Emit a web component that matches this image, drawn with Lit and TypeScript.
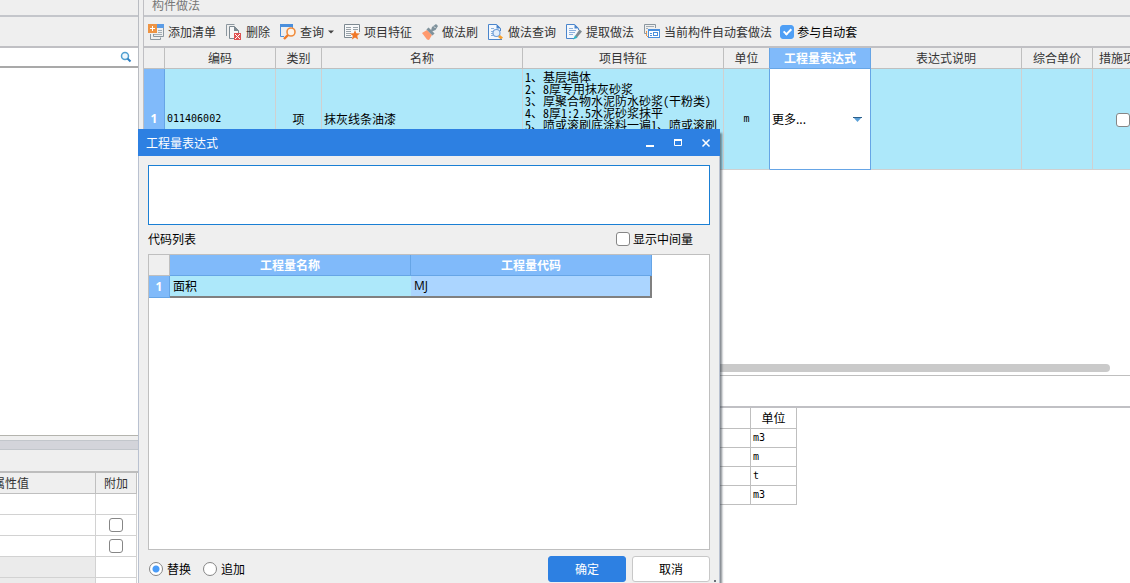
import { LitElement, html, css, svg, nothing } from "lit";
import { customElement, property, state } from "lit/decorators.js";

const icons: Record<string, unknown> = {
  add: svg`<path d="M9 0.500h6.500v11" fill="none" stroke="#8c979f"/><rect x="9" y="0" width="7" height="4" fill="#5b9ce6"/>
    <path d="M10 6.500h4M10 8.500h4M6 10.500h8" stroke="#a3adb4"/>
    <path d="M2.500 10v5.500h10v-2M5.500 10v2.500h10v-2" fill="none" stroke="#8c979f"/>
    <rect x="0" y="0" width="9" height="9" fill="#ee9444"/><path d="M4.500 2v5M2 4.500h5" stroke="#fff"/>`,
  remove: svg`<path d="M0.500 12V0.500h8" fill="none" stroke="#8c979f"/><path d="M8 14.500H3.500V2.500h5l4 4V9" fill="#f6f7f8" stroke="#7d8991"/>
    <path d="M8 2v5h5z" fill="#7d8991"/><rect x="8" y="9" width="7" height="7" fill="#e05252"/>
    <path d="M9 10l5 5M14 10l-5 5" stroke="#fff"/>`,
  query: svg`<path d="M0.500 0v12.500H4M12.500 2v2" fill="none" stroke="#4a8fdc"/><rect x="0" y="0" width="13" height="3" fill="#4a8fdc"/>
    <circle cx="11" cy="8" r="4" fill="#fdf4ea" stroke="#f08c3c" stroke-width="1.600"/><path d="M8 11l-4 4" stroke="#ee7a28" stroke-width="2.400"/>`,
  feature: svg`<path d="M8 13.500H0.500V0.500h15V8" fill="#f8f9fa" stroke="#7d8991"/>
    <path d="M2 3.500h5M2 5.500h5M2 7.500h5M2 9.500h5M2 11.500h5M9 3.500h5M9 5.500h5" stroke="#98a2a9"/>
    <path d="M11 6l1.300 3.200 3.700.3-2.800 2.300.9 3.700-3.100-2-3.100 2 .9-3.700L6 9.500l3.700-.3z" fill="#f07828"/>`,
  brush: svg`<path d="M0 9l5-3 5 5-3 5-2-.5z" fill="#ff9a6e"/><path d="M5.500 4.500l6 6" stroke="#7f929c" stroke-width="3"/>
    <path d="M9 6.500l1-3.500 4-3 2 2-2.500 4-3.500 1.500z" fill="#7f929c"/><path d="M12 2.500l1.500 1.500" stroke="#eee"/>`,
  search: svg`<path d="M14 15.500H0.500V0.500h8l4 4V7" fill="#f4f8fd" stroke="#4a85cc"/><path d="M8.500 0v4.500H13z" fill="#4a85cc"/>
    <path d="M3 4.500h3M3 7.500h2M3 9.500h2M3 11.500h2" stroke="#8bb0dc"/>
    <circle cx="8.500" cy="9" r="3.500" fill="#e3eefb" stroke="#6f9fd8" stroke-width="1.200"/><path d="M10 13l2-2 3 2.500-2 2z" fill="#f5a030"/>`,
  extract: svg`<path d="M8 14.500H0.500V0.500h8l4 4V6" fill="#f4f8fd" stroke="#4a85cc"/><path d="M8.500 0v4.500H13z" fill="#4a85cc"/>
    <path d="M3 4.500h4M3 6.500h7M3 8.500h6M3 10.500h4" stroke="#8bb0dc"/>
    <path d="M9 12l4.500-6.500 2.500 2L11 13.500z" fill="#7f8b92"/><path d="M7 15.500l2-4 2.500 2.200z" fill="#2fb5c4"/>`,
  auto: svg`<path d="M3 9.500H0.500V0.500h11V4" fill="none" stroke="#8c979f"/><path d="M2 2.500h8M2 4.500h2" stroke="#a3adb4"/>
    <path d="M2.500 7v5.500H4" fill="none" stroke="#ee9444" stroke-dasharray="2 1"/>
    <rect x="4.500" y="5.500" width="11" height="8" fill="#fff" stroke="#4a8fdc"/><rect x="4" y="5" width="12" height="2" fill="#4a8fdc"/>
    <path d="M6 9.500h2M6 11.500h2" stroke="#4a8fdc"/><rect x="9.500" y="8.500" width="4" height="3" fill="none" stroke="#4a8fdc"/>`,
};

const controls = css`
  input[type="checkbox"],
  input[type="radio"] {
    appearance: none;
    box-sizing: border-box;
    width: 14px;
    height: 14px;
    margin: 0;
    flex: none;
    border: 1px solid #868686;
    border-radius: 3px;
    background: #fff;
    position: relative;
    vertical-align: middle;
  }
  input[type="radio"] {
    border-radius: 50%;
  }
  input[type="radio"]:checked {
    background: radial-gradient(circle, #4a9cf8 3px, #fff 4px);
  }
  input[type="checkbox"]:checked {
    border-color: #4f9ff5;
    background: #4f9ff5;
  }
  input[type="checkbox"]:checked::after {
    content: "";
    position: absolute;
    left: 4px;
    top: 1px;
    width: 3px;
    height: 6px;
    border: solid #fff;
    border-width: 0 2px 2px 0;
    transform: rotate(45deg);
  }
  label {
    display: flex;
    align-items: center;
    gap: 3px;
    white-space: nowrap;
    color: #000;
  }
  table {
    table-layout: fixed;
    border-collapse: separate;
    border-spacing: 0;
  }
  th,
  td {
    box-sizing: border-box;
    padding: 0;
    font-weight: normal;
    white-space: nowrap;
    overflow: hidden;
  }
  button,
  select,
  input,
  textarea {
    font: inherit;
  }
`;

@customElement("tool-button")
class ToolButton extends LitElement {
  @property() icon = "";
  @property() label = "";
  @property({ type: Boolean }) menu = false;

  static styles = css`
    :host {
      display: block;
      flex: none;
    }
    button {
      display: flex;
      align-items: center;
      gap: 4px;
      border: 0;
      padding: 0;
      background: none;
      font: inherit;
      color: #333;
      white-space: nowrap;
    }
    svg {
      display: block;
    }
  `;

  render() {
    return html`<button type="button">
      <svg width="16" height="16" viewBox="0 0 16 16">${icons[this.icon]}</svg>
      <span>${this.label}</span>
      ${this.menu
        ? html`<svg width="6" height="4" viewBox="0 0 6 4"><path d="M0 0.500h6L3 3.500z" fill="#444" /></svg>`
        : nothing}
    </button>`;
  }
}

@customElement("side-panel")
class SidePanel extends LitElement {
  static styles = [
    controls,
    css`
      :host {
        display: flex;
        flex-direction: column;
        box-sizing: border-box;
        width: 139px;
        flex: none;
        border-right: 1px solid #b9bcc2;
        overflow: hidden;
      }
      .strip {
        height: 15px;
        border-bottom: 2px solid #c4c6cb;
      }
      .tools {
        height: 29px;
        border-bottom: 2px solid #c0c0c4;
      }
      .search {
        display: flex;
        align-items: center;
        height: 18px;
        padding-right: 6px;
        background: #fff;
        border-bottom: 2px solid #a9a9a9;
      }
      .search input {
        flex: 1;
        min-width: 0;
        height: 16px;
        border: 0;
        padding: 0 4px;
        outline: 0;
        background: none;
      }
      .tree {
        flex: 1;
        background: #fff;
        border-bottom: 1px solid #b4b4ae;
      }
      .splitter {
        height: 8px;
        margin-top: 4px;
        background: #d3d4da;
        border: solid #c2c6cb;
        border-width: 1px 0;
      }
      .caption {
        height: 21px;
        border-bottom: 2px solid #bdbdbd;
      }
      .props {
        display: flex;
        justify-content: flex-end;
        height: 110px;
        padding-right: 1px;
        background: #fff;
        overflow: hidden;
      }
      table {
        width: 210px;
        flex: none;
        align-self: flex-start;
      }
      th,
      td {
        height: 21px;
        text-align: center;
        line-height: 18px;
        border: solid #d2d2d2;
        border-width: 0 1px 1px 0;
      }
      th {
        background: #efefef;
        color: #333;
        border-color: #bfbfbf;
      }
      .value {
        width: 169px;
      }
      .off {
        background: #ebebeb;
      }
      td input[type="checkbox"] {
        display: block;
        margin: 0 auto;
      }
    `,
  ];

  render() {
    return html`
      <div class="strip"></div>
      <div class="tools"></div>
      <div class="search">
        <input type="text" aria-label="搜索" />
        <svg width="12" height="12" viewBox="0 0 12 12">
          <circle cx="5" cy="5" r="3.500" fill="#eef7fd" stroke="#4f9fd0" stroke-width="1.500" />
          <path d="M7.500 7.500l3 3" stroke="#2f7fc0" stroke-width="2" />
        </svg>
      </div>
      <div class="tree"></div>
      <div class="splitter"></div>
      <div class="caption"></div>
      <div class="props">
        <table>
          <tr><th class="value">属性值</th><th>附加</th></tr>
          <tr><td></td><td></td></tr>
          <tr><td></td><td><input type="checkbox" aria-label="附加" /></td></tr>
          <tr><td></td><td><input type="checkbox" aria-label="附加" /></td></tr>
          <tr><td class="off"></td><td></td></tr>
          <tr><td class="off"></td><td></td></tr>
        </table>
      </div>
    `;
  }
}

@customElement("quantity-dialog")
class QuantityDialog extends LitElement {
  @state() mode = "replace";

  static styles = [
    controls,
    css`
      :host {
        display: flex;
        flex-direction: column;
        box-sizing: border-box;
        background: #efefef;
        box-shadow: 2px 4px 2px rgba(50, 60, 70, 0.6);
        color: #000;
      }
      .title {
        display: flex;
        align-items: center;
        height: 27px;
        padding: 0 8px;
        background: #2d80e2;
        color: #fff;
      }
      .title h2 {
        flex: 1;
        margin: 0;
        font: inherit;
      }
      .title button {
        display: block;
        width: 12px;
        height: 12px;
        margin-left: 16px;
        padding: 0;
        border: 0;
        background: none;
      }
      .title svg {
        display: block;
      }
      .body {
        flex: 1;
        display: flex;
        flex-direction: column;
        padding: 9px 9px 1px;
        border: solid #b9c1d0;
        border-width: 0 1px 0 1px;
      }
      textarea {
        display: block;
        box-sizing: border-box;
        width: 100%;
        height: 60px;
        flex: none;
        border: 1px solid #1a7fd4;
        outline: 0;
        resize: none;
        background: #fff;
      }
      .row {
        display: flex;
        align-items: center;
        justify-content: space-between;
        height: 28px;
        padding: 0 17px 1px 0;
      }
      .list {
        flex: 1;
        border: 1px solid #bfbfbf;
        background: #fff;
        overflow: hidden;
      }
      table {
        width: 503px;
      }
      .num {
        width: 21px;
      }
      th {
        height: 21px;
        line-height: 18px;
        border: solid #66a5e6;
        border-width: 0 1px 1px 0;
        background: #80bafa;
        color: #fff;
        font-weight: bold;
      }
      th.tag {
        font-family: "Open Sans", sans-serif;
      }
      th.corner {
        background: #efefef;
        border-color: #bfbfbf;
      }
      td {
        height: 22px;
        padding-left: 3px;
        border-bottom: 2px solid #808080;
        background: #ade8fa;
      }
      td.code {
        border-right: 2px solid #808080;
        background: #abd5ff;
        font-family: "Open Sans", sans-serif;
      }
      .actions {
        display: flex;
        align-items: center;
        gap: 6px;
        height: 26px;
        padding: 6px 0 0 1px;
      }
      .modes {
        flex: 1;
        display: flex;
        gap: 12px;
      }
      .modes label {
        gap: 4px;
      }
      .actions button {
        box-sizing: border-box;
        width: 78px;
        height: 26px;
        padding: 0;
        border: 1px solid #c8c8c8;
        border-radius: 3px;
        background: #fff;
        color: #000;
      }
      .actions .ok {
        border-color: #2d80e2;
        background: #2d80e2;
        color: #fff;
      }
      .grip {
        position: absolute;
        right: 4px;
        bottom: 1px;
        width: 2px;
        height: 2px;
        background: #6b7078;
      }
    `,
  ];

  render() {
    return html`
      <div class="title">
        <h2>工程量表达式</h2>
        <button type="button" aria-label="最小化">
          <svg width="12" height="12"><path d="M2 9h8" stroke="#fff" stroke-width="2" /></svg>
        </button>
        <button type="button" aria-label="最大化">
          <svg width="12" height="12"><path d="M2.500 3v5.500h7V3" fill="none" stroke="#fff" /><path d="M2 3h8" stroke="#fff" stroke-width="2" /></svg>
        </button>
        <button type="button" aria-label="关闭">
          <svg width="12" height="12"><path d="M2.500 2.500l7 7M9.500 2.500l-7 7" stroke="#fff" stroke-width="1.500" /></svg>
        </button>
      </div>
      <div class="body">
        <textarea aria-label="工程量表达式"></textarea>
        <div class="row">
          <span>代码列表</span>
          <label><input type="checkbox" />显示中间量</label>
        </div>
        <div class="list">
          <table>
            <tr><th class="num corner"></th><th>工程量名称</th><th>工程量代码</th></tr>
            <tr><th class="tag">1</th><td>面积</td><td class="code">MJ</td></tr>
          </table>
        </div>
        <div class="actions">
          <div class="modes">
            <label><input type="radio" name="mode" ?checked=${this.mode === "replace"} @change=${() => (this.mode = "replace")} />替换</label>
            <label><input type="radio" name="mode" ?checked=${this.mode === "append"} @change=${() => (this.mode = "append")} />追加</label>
          </div>
          <button class="ok" type="button">确定</button>
          <button type="button">取消</button>
        </div>
      </div>
      <div class="grip"></div>
    `;
  }
}

@customElement("app-root")
class AppRoot extends LitElement {
  static styles = [
    controls,
    css`
      :host {
        display: flex;
        position: relative;
        height: 100vh;
        overflow: hidden;
        background: #efefef;
        font: 12px/16px "Noto Sans CJK SC", sans-serif;
        color: #333;
      }
      .main {
        flex: 1;
        min-width: 0;
        display: flex;
        flex-direction: column;
        margin-left: 4px;
        border-left: 1px solid #bfbfc3;
      }
      .caption {
        height: 15px;
        padding-left: 8px;
        line-height: 10px;
        color: #777;
        border-bottom: 2px solid #c4c6cb;
      }
      .toolbar {
        display: flex;
        align-items: center;
        gap: 10px;
        height: 29px;
        padding-left: 4px;
        border-bottom: 2px solid #c0c0c4;
        overflow: hidden;
      }
      .tools {
        display: flex;
        gap: 10px;
      }
      .toolbar {
        gap: 8px;
      }
      .grid {
        flex: 1;
        display: flex;
        flex-direction: column;
        justify-content: space-between;
        background: #fff;
        overflow: hidden;
      }
      .items {
        width: 1010px;
      }
      .items th {
        height: 21px;
        line-height: 18px;
        background: #efefef;
        border: solid #bfbfbf;
        border-width: 0 1px 1px 0;
      }
      .items td {
        height: 101px;
        padding: 0 2px;
        background: #ade8fa;
        color: #000;
        border: solid #d0d0d0;
        border-width: 0 1px 1px 0;
        font-feature-settings: "hwid";
      }
      .items th.on {
        background: #80bafa;
        border-color: #66a5e6;
        color: #fff;
        font-weight: bold;
      }
      .items .tag {
        background: #80bafa;
        border-color: #66a5e6;
        color: #fff;
        font-weight: bold;
        font-family: "Open Sans", sans-serif;
      }
      .items td.mid {
        text-align: center;
      }
      .items .before {
        border-right-color: #66a5e6;
      }
      .items td.text {
        vertical-align: top;
        padding-top: 2px;
        line-height: 12px;
      }
      .items td.edit {
        background: #fff;
        border-color: #66a5e6;
        font-feature-settings: normal;
      }
      td.mono {
        font-family: "DejaVu Sans Mono", monospace;
        font-size: 10px;
      }
      .picker {
        display: flex;
        align-items: center;
        padding-right: 6px;
      }
      select {
        flex: 1;
        min-width: 0;
        appearance: none;
        border: 0;
        padding: 0;
        background: none;
        color: #000;
      }
      .w21 { width: 21px; }
      .w46 { width: 46px; }
      .w61 { width: 61px; }
      .w71 { width: 71px; }
      .w101 { width: 101px; }
      .w111 { width: 111px; }
      .w151 { width: 151px; }
      .w201 { width: 201px; }
      .scroll {
        height: 8px;
        margin: 0 20px 3px 0;
        border-radius: 4px;
        background: #cacaca;
      }
      .lower {
        height: 207px;
        border-top: 1px solid #bfbfbf;
        background: #fff;
      }
      .band {
        height: 30px;
        border-bottom: 2px solid #c0c0c4;
      }
      .units {
        width: 653px;
        color: #000;
      }
      .units th,
      .units td {
        height: 19px;
        line-height: 16px;
        border: solid #bfbfbf;
        border-width: 0 1px 1px 0;
      }
      .units th {
        height: 21px;
      }
      .units td {
        padding-left: 2px;
      }
      quantity-dialog {
        position: absolute;
        left: 138px;
        top: 129px;
        bottom: 0;
        width: 582px;
      }
    `,
  ];

  tools = [
    ["add", "添加清单"],
    ["remove", "删除"],
    ["query", "查询", true],
    ["feature", "项目特征"],
    ["brush", "做法刷"],
    ["search", "做法查询"],
    ["extract", "提取做法"],
    ["auto", "当前构件自动套做法"],
  ] as [string, string, boolean?][];

  features = [
    "1、基层墙体",
    "2、8厚专用抹灰砂浆",
    "3、厚聚合物水泥防水砂浆(干粉类)",
    "4、8厚1:2.5水泥砂浆抹平",
    "5、喷或滚刷底涂料一遍1、喷或滚刷",
  ];

  render() {
    return html`
      <side-panel></side-panel>
      <div class="main">
        <div class="caption">构件做法</div>
        <div class="toolbar">
          <div class="tools">
            ${this.tools.map(
              ([icon, label, menu]) => html`<tool-button .icon=${icon} .label=${label} .menu=${!!menu}></tool-button>`
            )}
          </div>
          <label><input type="checkbox" checked />参与自动套</label>
        </div>
        <div class="grid">
          <table class="items">
            <tr>
              <th class="w21"></th>
              <th class="w111">编码</th>
              <th class="w46">类别</th>
              <th class="w201">名称</th>
              <th class="w201">项目特征</th>
              <th class="w46 before">单位</th>
              <th class="w101 on">工程量表达式</th>
              <th class="w151">表达式说明</th>
              <th class="w71">综合单价</th>
              <th class="w61">措施项目</th>
            </tr>
            <tr>
              <th class="tag">1</th>
              <td class="mono">011406002</td>
              <td class="mid">项</td>
              <td>抹灰线条油漆</td>
              <td class="text">${this.features.map((line) => html`<div>${line}</div>`)}</td>
              <td class="mid mono before">m</td>
              <td class="edit">
                <div class="picker">
                  <select aria-label="工程量表达式"><option>更多...</option></select>
                  <svg width="9" height="5" viewBox="0 0 9 5"><path d="M0 0h9L4.500 5z" fill="#5aa0d8" /><path d="M0 0.500h9" stroke="#2c5f8a" /></svg>
                </div>
              </td>
              <td></td>
              <td></td>
              <td class="mid"><input type="checkbox" aria-label="措施项目" /></td>
            </tr>
          </table>
          <div class="scroll"></div>
        </div>
        <div class="lower">
          <div class="band"></div>
          <table class="units">
            <tr><th></th><th class="w46">单位</th></tr>
            ${["m3", "m", "t", "m3"].map((u) => html`<tr><td></td><td class="mono">${u}</td></tr>`)}
          </table>
        </div>
      </div>
      <quantity-dialog></quantity-dialog>
    `;
  }
}
